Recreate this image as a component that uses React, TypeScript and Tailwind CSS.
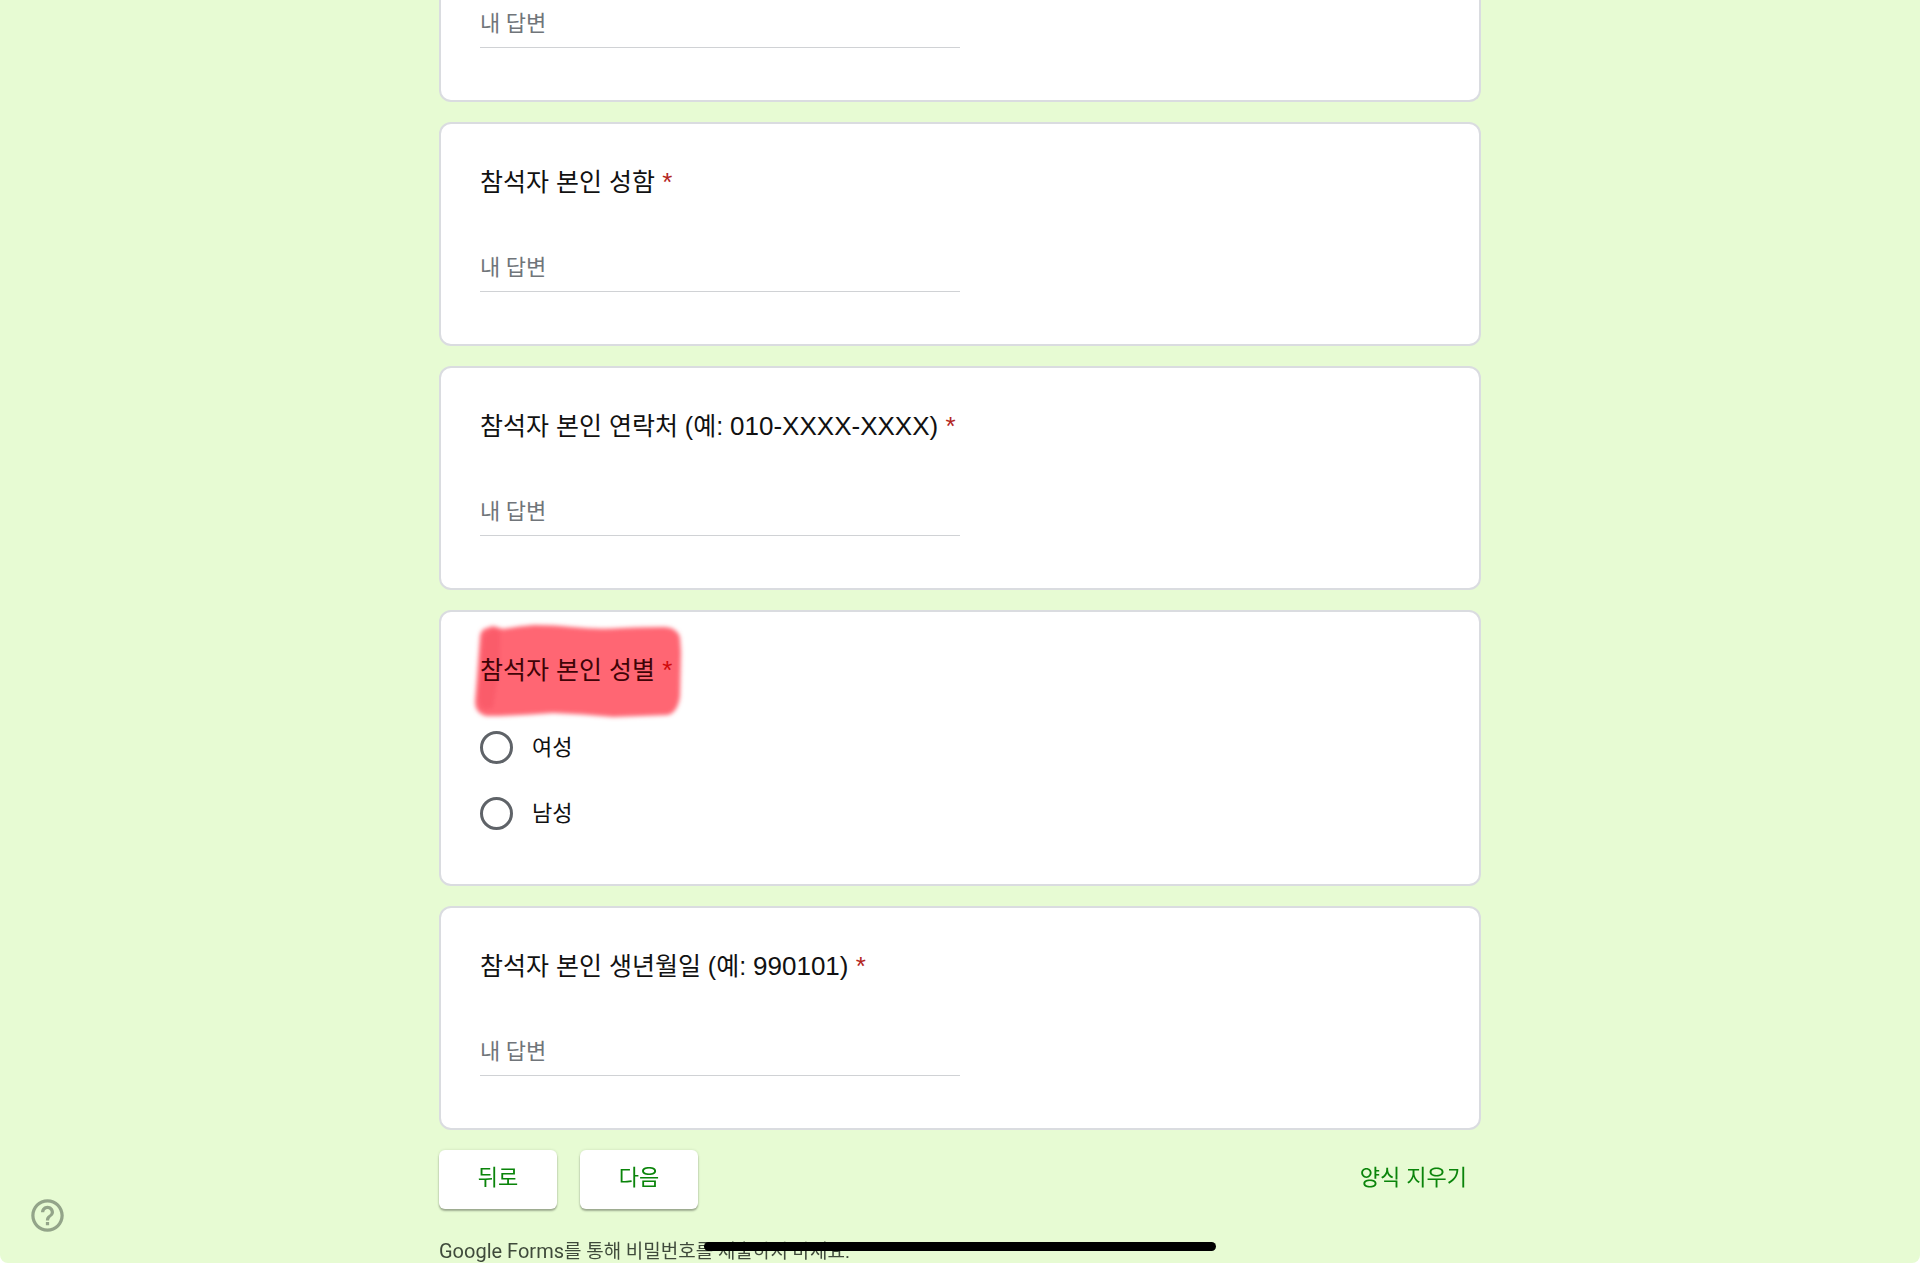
import { ReactNode } from "react";

function Card({ children, className = "rounded-xl pt-[42px]" }: { children: ReactNode; className?: string }) {
    return (
        <div className={`border-2 border-[#dadce0] bg-white px-[39px] pb-[52px] ${className}`}>
            {children}
        </div>
    );
}

function AnswerInput({ id, label }: { id: string; label?: string }) {
    return (
        <input
            id={id}
            type="text"
            aria-label={label}
            placeholder="내 답변"
            className="block h-12 w-1/2 border-b border-[#d0d2d5] bg-transparent font-['Roboto','Noto_Sans_CJK_KR',sans-serif] text-[22px] text-black outline-none placeholder:text-[#70757a]"
        />
    );
}

function TextQuestion({ id, title, example }: { id: string; title: string; example?: string }) {
    return (
        <Card>
            <label htmlFor={id} className="mb-[46px] block text-[25px] leading-8">
                {title}
                {example && <span className="text-[26px]">{example}</span>}
                <span className="text-[26px] text-[#b3261e]"> *</span>
            </label>
            <AnswerInput id={id} />
        </Card>
    );
}

function Marker() {
    return (
        <svg
            viewBox="0 0 216 100"
            width="216"
            height="100"
            className="pointer-events-none absolute -top-8 -left-2 overflow-visible mix-blend-multiply"
            aria-hidden="true"
        >
            <defs>
                <filter id="soft" x="-10%" y="-10%" width="120%" height="120%">
                    <feGaussianBlur stdDeviation="2" />
                </filter>
            </defs>
            <g filter="url(#soft)">
                <path
                    fill="#ff6673"
                    d="M8 14 Q9 7 15 6 L21 4 L31 7 Q48 4 62 3 Q84 3 100 5 Q128 8 150 6 Q175 5 193 5 Q206 6 208 16 L209 30 L208 74 Q206 90 196 93 Q170 94 141 95 Q110 92 81 91 Q55 93 28 94 L14 94 Q3 91 3 80 L5 55 Z"
                />
                <path fill="#fa5c6a" d="M12 14 L21 7 L28 10 Q29 30 26 55 L21 86 L11 87 Q6 82 7 72 Z" />
            </g>
        </svg>
    );
}

function Option({ label }: { label: string }) {
    return (
        <label className="flex h-8 items-center gap-[19px] text-[22px]">
            <input
                type="radio"
                name="gender"
                className="size-[33px] shrink-0 appearance-none rounded-full border-3 border-[#5f6368] checked:border-[10px]"
            />
            {label}
        </label>
    );
}

function NavButton({ children }: { children: ReactNode }) {
    return (
        <button className="h-[59px] w-[118px] rounded-md bg-white pb-1 text-[22px] text-[#0a840a] shadow-[0_2px_2px_rgba(0,0,0,0.3),0_0_3px_rgba(0,0,0,0.12)]">
            {children}
        </button>
    );
}

export default function App() {
    return (
        <div className="relative h-screen overflow-hidden rounded-b-lg bg-[#e7fbd3] font-['Liberation_Sans','Noto_Sans_CJK_KR',sans-serif] text-[#111111]">
            <form className="mx-auto flex max-w-[1042px] flex-col gap-5">
                <Card className="rounded-b-xl border-t-0">
                    <AnswerInput id="previous" label="내 답변" />
                </Card>
                <TextQuestion id="name" title="참석자 본인 성함" />
                <TextQuestion id="phone" title="참석자 본인 연락처 (예: " example="010-XXXX-XXXX)" />
                <Card>
                    <fieldset>
                        <legend className="relative mb-[45px] text-[25px] leading-8 text-[#40070e]">
                            참석자 본인 성별
                            <span className="text-[26px] text-[#d01a1a]"> *</span>
                            <Marker />
                        </legend>
                        <div className="flex flex-col gap-[34px] pb-[3px]">
                            <Option label="여성" />
                            <Option label="남성" />
                        </div>
                    </fieldset>
                </Card>
                <TextQuestion id="birth" title="참석자 본인 생년월일 (예: " example="990101)" />
                <div className="flex items-center gap-[23px]">
                    <NavButton>뒤로</NavButton>
                    <NavButton>다음</NavButton>
                    <button type="reset" className="mr-3.5 ml-auto pb-1 text-[22px] text-[#0a840a]">
                        양식 지우기
                    </button>
                </div>
                <p className="mt-2.5 font-['Roboto','Noto_Sans_CJK_KR',sans-serif] text-[19px] leading-6 text-[#3f4a3b]">
                    <span className="text-xl leading-6">Google Forms</span>를 통해 비밀번호를 제출하지 마세요.
                </p>
            </form>

            <button aria-label="도움말" className="absolute bottom-7 left-7 text-[#93a489]">
                <svg viewBox="0 0 24 24" className="size-[39px]" fill="currentColor">
                    <path d="M11 18h2v-2h-2v2zm1-16C6.48 2 2 6.48 2 12s4.48 10 10 10 10-4.48 10-10S17.52 2 12 2zm0 18c-4.41 0-8-3.59-8-8s3.59-8 8-8 8 3.59 8 8-3.59 8-8 8zm0-14c-2.21 0-4 1.79-4 4h2c0-1.1.9-2 2-2s2 .9 2 2c0 2-3 1.75-3 5h2c0-2.25 3-2.5 3-5 0-2.21-1.79-4-4-4z" />
                </svg>
            </button>
            <div className="absolute bottom-3 left-1/2 h-[9px] w-[512px] -translate-x-1/2 rounded-full bg-black" />
        </div>
    );
}
